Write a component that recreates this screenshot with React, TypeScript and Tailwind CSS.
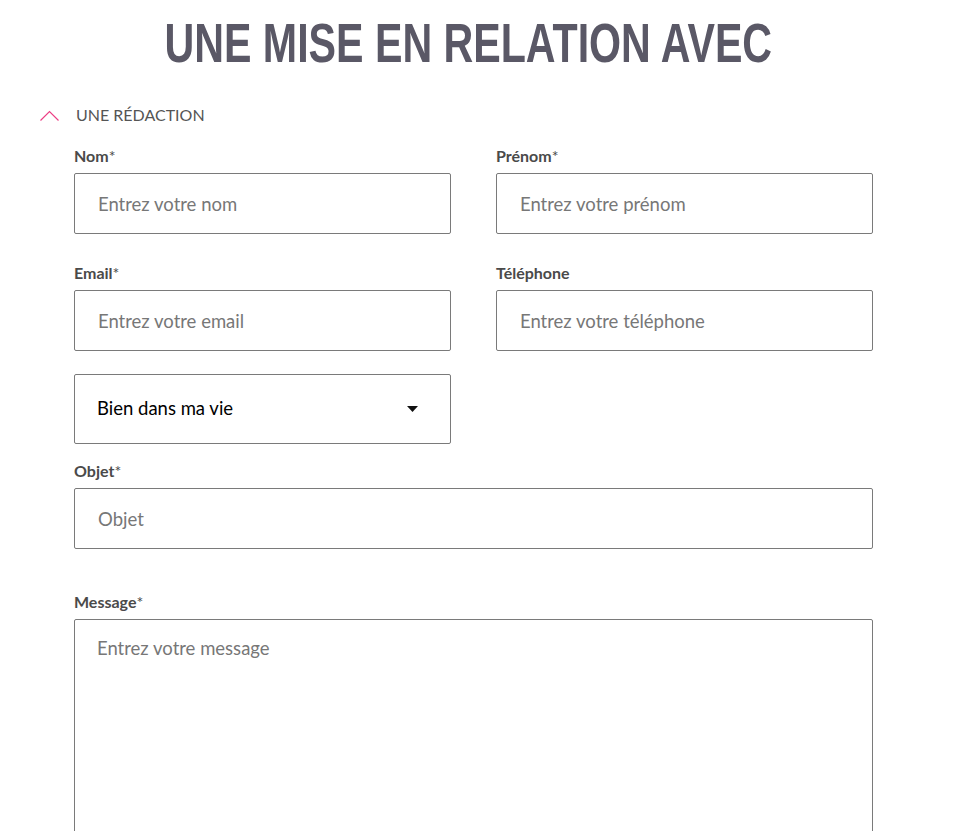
function Field({
  label,
  placeholder,
  required = true,
  className = "",
}: {
  label: string;
  placeholder: string;
  required?: boolean;
  className?: string;
}) {
  return (
    <div className={`flex flex-col ${className}`}>
      <label className="mb-[7px] text-[16px] font-bold leading-[20px] text-[#4a4a4a]">
        {label}
        {required && <span className="font-normal">*</span>}
      </label>
      <input
        placeholder={placeholder}
        className="h-[61px] w-full rounded-[2px] border border-[#7a7a7a] bg-white px-[23px] text-[18.5px] text-[#222] outline-none placeholder:text-[#777]"
      />
    </div>
  );
}

export default function App() {
  return (
    <div className="min-h-[831px] bg-white font-['Lato',sans-serif] text-[#4a4a4a]">
      <div className="w-[936px] pt-[14px] text-center">
        <h1 className="inline-block origin-center scale-x-[0.735] font-['Liberation_Sans',sans-serif] text-[56px] font-bold leading-[58px] text-[#5a5866]">
          UNE MISE EN RELATION AVEC
        </h1>
      </div>

      <div className="mt-[33px] flex items-center gap-[17px] pl-[40px]">
        <svg width="19" height="11" viewBox="0 0 19 11" fill="none">
          <path d="M0.5 10.5L9.5 1.5L18.5 10.5" stroke="#ec3f85" strokeWidth="1.2" />
        </svg>
        <span className="text-[16px] uppercase leading-[20px] text-[#555]">Une rédaction</span>
      </div>

      <form className="ml-[74px] mt-[21px] w-[799px]">
        <div className="grid grid-cols-2 gap-x-[45px] gap-y-[29px]">
          <Field label="Nom" placeholder="Entrez votre nom" />
          <Field label="Prénom" placeholder="Entrez votre prénom" />
          <Field label="Email" placeholder="Entrez votre email" />
          <Field label="Téléphone" placeholder="Entrez votre téléphone" required={false} />
        </div>

        <div className="mt-[23px] grid grid-cols-2 gap-x-[45px]">
          <button
            type="button"
            className="flex h-[70px] items-center justify-between rounded-[2px] border border-[#7a7a7a] bg-white pl-[22px] pr-[32px] text-[18.5px] text-black"
          >
            <span>Bien dans ma vie</span>
            <svg width="11" height="6" viewBox="0 0 11 6">
              <path d="M0 0h11L5.5 6z" fill="#111" />
            </svg>
          </button>
        </div>

        <Field className="mt-[17px]" label="Objet" placeholder="Objet" />

        <div className="mt-[43px] flex flex-col">
          <label className="mb-[7px] text-[16px] font-bold leading-[20px] text-[#4a4a4a]">
            Message<span className="font-normal">*</span>
          </label>
          <textarea
            placeholder="Entrez votre message"
            className="h-[240px] w-full resize-none rounded-[2px] border border-[#7a7a7a] bg-white px-[22px] py-[15px] text-[18.5px] text-[#222] outline-none placeholder:text-[#777]"
          />
        </div>
      </form>
    </div>
  );
}
